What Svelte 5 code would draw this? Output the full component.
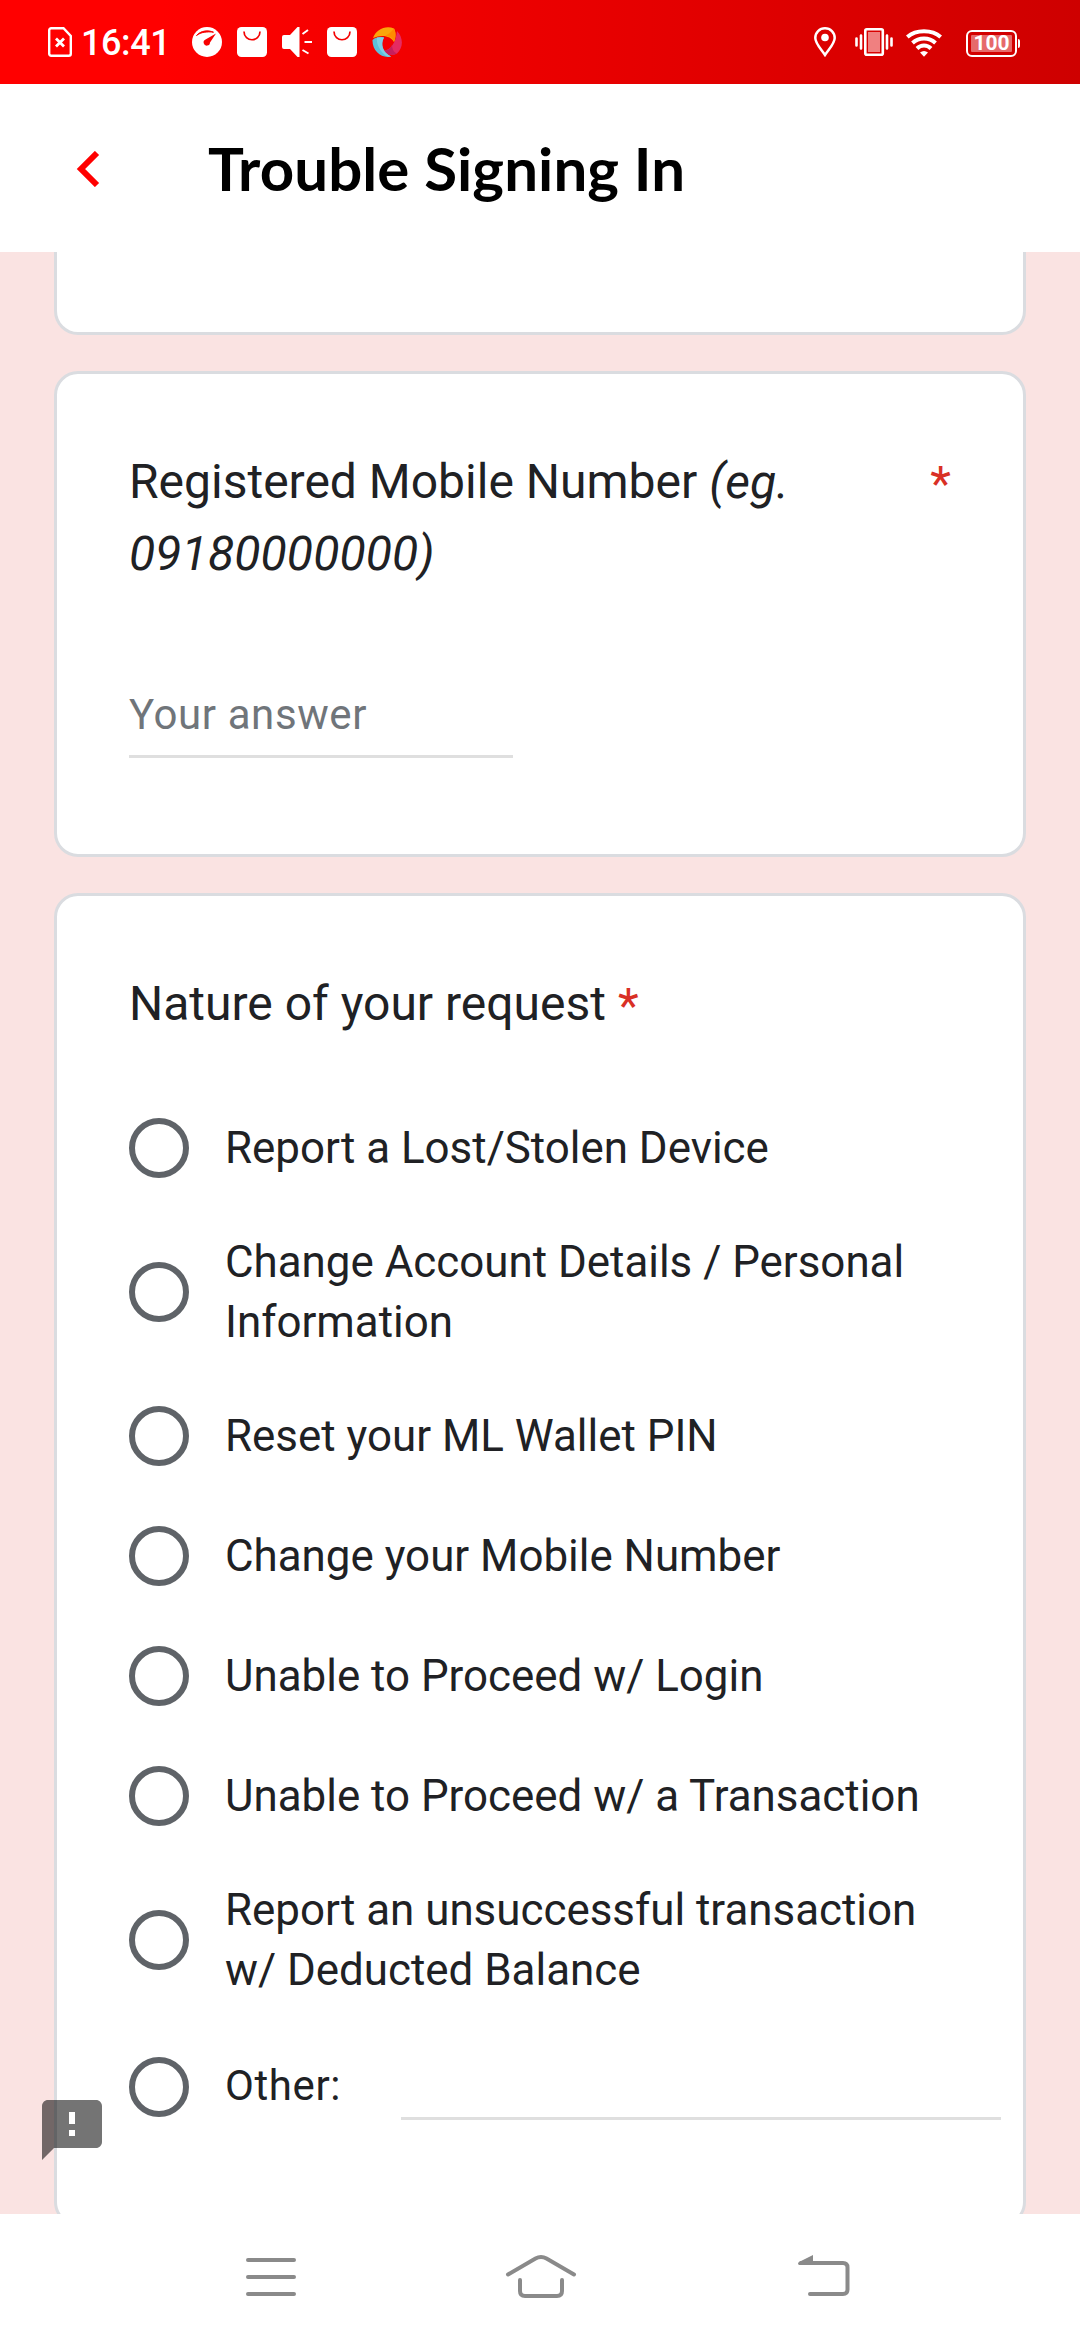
<script>
  const options = [
    'Report a Lost/Stolen Device',
    'Change Account Details / Personal Information',
    'Reset your ML Wallet PIN',
    'Change your Mobile Number',
    'Unable to Proceed w/ Login',
    'Unable to Proceed w/ a Transaction',
    'Report an unsuccessful transaction w/ Deducted Balance'
  ];
</script>

{#snippet bag()}
  <svg width="30" height="30" viewBox="0 0 30 30">
    <rect width="30" height="30" rx="4.5" fill="#fff" />
    <path d="M7 4.5c0 11 16 11 16 0" fill="none" stroke="#f50000" stroke-width="1.7" />
  </svg>
{/snippet}

<div class="screen">
  <div class="status">
    <div class="left">
      <svg class="sim" width="24" height="30" viewBox="0 0 24 30" fill="none" stroke="#fff">
        <path d="M3.4 1.2H15.5L22.800 9V26.800a2 2 0 0 1-2 2H3.2a2 2 0 0 1-2-2V3.2a2 2 0 0 1 2-2z" stroke-width="2.4" />
        <path d="M8 11.5l8 8M16 11.5l-8 8" stroke-width="2.8" />
      </svg>
      <span class="time">16:41</span>
      <div class="icons">
        <svg width="30" height="30" viewBox="0 0 30 30">
          <circle cx="15" cy="15" r="15" fill="#fff" />
          <path d="M4.5 8.5C9 3.5 16 2.8 21.5 5.2C15 4.4 9 5 4.5 8.5z" fill="#f80000" stroke="#f80000" />
          <path d="M24 6.5L18 15.5a3.2 3.2 0 1 1-4.5-3z" fill="#f80000" />
        </svg>
        {@render bag()}
        <svg width="30" height="30" viewBox="0 0 30 30">
          <path d="M2 8H8L15.5 0H17.5V30H15.5L8 22H2a2 2 0 0 1-2-2V10a2 2 0 0 1 2-2z" fill="#fff" />
          <path d="M20.5 7L26 3M22.5 15H30M20.5 23l6 3.5" stroke="#fff" stroke-width="2" />
        </svg>
        {@render bag()}
        <svg width="30" height="30" viewBox="0 0 30 30">
          <path d="M1 11C4 3 13-2 22 1.500C24 5 24 10 22 15C19 9 10 7 1 11z" fill="#fba50a" />
          <path d="M25 4C31 10 32 20 25 26.500C21 29 15 28 11.500 24C19 23 24 15 25 4z" fill="#e52b62" />
          <path d="M.5 13C4 10 8 9.500 12 10.500C8 18 11 25 19 29.500C10 32 0 24 .5 13z" fill="#5dbfdb" />
          <path d="M13 9C18 9 21 11 22 15C24 11 24 5 22 1.500C20 4 17 7 13 9z" fill="#ff8c00" />
          <path d="M20 17C20 20 17 23 11.500 24C15 28 21 29 25 26.500C21 25 20 21 20 17z" fill="#c51f5d" />
          <path d="M5 10.500C4 17 8 24 14 29C17 30 18 30 19 29.500C11 25 8 18 12 10.500z" fill="#7dcfe4" />
        </svg>
      </div>
    </div>
    <div class="right">
      <svg width="22" height="30" viewBox="0 0 22 30">
        <path d="M11 1.300C5.500 1.300 1.300 5.500 1.300 11C1.300 16.500 7 22 11 28C15 22 20.700 16.500 20.700 11C20.700 5.500 16.500 1.300 11 1.300z" fill="none" stroke="#fff" stroke-width="2.500" />
        <circle cx="11" cy="10.500" r="3.800" fill="#fff" />
      </svg>
      <svg class="vib" width="38" height="28" viewBox="0 0 38 28">
        <rect x="10.300" y="1.300" width="17.500" height="25.400" rx="1.500" fill="none" stroke="#fff" stroke-width="2.600" />
        <rect x="13" y="4" width="12" height="20" fill="#f08080" />
        <path d="M6 7.500v13M32 7.500v13M1.500 10.500v7M36.500 10.500v7" stroke="#fff" stroke-width="2.600" stroke-linecap="round" />
      </svg>
      <svg class="wifi" width="36" height="28" viewBox="0 0 36 28">
        <g fill="none" stroke="#fff" stroke-width="4">
          <path d="M1.300 8C10 .2 26 .2 34.700 8" />
          <path d="M6.500 14C13 8 23 8 29.500 14" />
          <path d="M11 19.500C15 15.500 21 15.500 25 19.500" />
        </g>
        <path d="M14 23.500Q18 20.500 22 23.500L18 27.800z" fill="#fff" />
      </svg>
      <div class="battery"><div class="cell">100</div><i></i></div>
    </div>
  </div>

  <header>
    <svg width="24" height="36" viewBox="0 0 24 36">
      <path d="M21 2L5 18L21 34" fill="none" stroke="#f00" stroke-width="6" />
    </svg>
    <h1>Trouble Signing In</h1>
  </header>

  <main>
    <section class="card previous"></section>

    <section class="card mobile">
      <div class="question">
        <div>
          <p>Registered Mobile Number <em>(eg.</em></p>
          <p><em>09180000000)</em></p>
        </div>
        <b class="aside">*</b>
      </div>
      <div class="answer">Your answer</div>
    </section>

    <section class="card nature">
      <div class="question"><p>Nature of your request <b>*</b></p></div>
      <div class="options">
        {#each options as option}
          <div class="option"><span class="radio"></span><span class="label">{option}</span></div>
        {/each}
        <div class="option other">
          <span class="radio"></span><span class="label">Other:</span><span class="line"></span>
        </div>
      </div>
    </section>

    <svg class="feedback" width="72" height="72" viewBox="0 0 24 24">
      <path d="M20 2H4c-1.100 0-2 .9-2 2v18l4-4h14c1.100 0 2-.9 2-2V4c0-1.100-.9-2-2-2zm-7 12h-2v-2h2v2zm0-4h-2V6h2v4z" />
    </svg>
  </main>

  <nav>
    <svg width="50" height="46" viewBox="0 0 50 46">
      <path d="M2 6H48M2 23H48M2 40H48" />
    </svg>
    <svg width="72" height="46" viewBox="0 0 72 46">
      <path d="M3 20.500L30.500 4.500Q36 1.500 41.500 4.500L69 20.500M15 26V37Q15 42 20 42H52Q57 42 57 37V26" />
    </svg>
    <svg width="64" height="46" viewBox="0 0 64 46">
      <path d="M15 9H57Q61.500 9 61.500 13.500V35.500Q61.500 40 57 40H24" />
      <path class="tip" d="M13 11Q11 9.500 13 8L27 1V11z" />
    </svg>
  </nav>
</div>

<style>
  :global(body) { margin: 0; background: #fff; }
  .screen {
    width: 1080px; height: 2340px; display: flex; flex-direction: column;
    font-family: Roboto, sans-serif; color: #202124; background: #fff; overflow: hidden;
  }
  svg { display: block; flex: none; }
  .status {
    height: 84px; flex: none; box-sizing: border-box; padding: 0 60px 0 48px;
    display: flex; align-items: center; justify-content: space-between;
    background: linear-gradient(90deg, #f00 0%, #f00 15%, #ce0000 100%); color: #fff;
  }
  .left, .right, .icons { display: flex; align-items: center; }
  .time {
    width: 111px; margin-left: 9px; box-sizing: border-box; padding-top: 2px;
    font-size: 36px; font-weight: 500; line-height: 42px; letter-spacing: -0.4px;
  }
  .icons { gap: 15px; }
  .vib { margin-left: 19px; }
  .wifi { margin: 2px 24px 0 13px; }
  .battery { display: flex; align-items: center; margin-top: 3px; }
  .cell {
    width: 51px; height: 27px; box-sizing: border-box; border: 2px solid #fff; border-radius: 6px;
    padding: 3px; font-size: 21px; font-weight: 700; line-height: 17px; text-align: center;
    background: #e66a6a content-box; background-clip: content-box;
  }
  .battery i { width: 2px; height: 9px; margin-left: 1px; background: #fff; border-radius: 0 2px 2px 0; }
  header { height: 168px; flex: none; display: flex; align-items: center; padding-left: 76px; background: #fff; }
  header svg { margin-top: 2px; }
  h1 { margin: 0 0 0 108px; font: 700 60px/72px Lato, sans-serif; letter-spacing: 0.1px; color: #000; }
  main {
    height: 1962px; flex: none; position: relative; overflow: hidden; box-sizing: border-box;
    padding: 0 54px; background: #fae3e2; display: flex; flex-direction: column; gap: 36px;
  }
  .card { flex: none; box-sizing: border-box; border: 3px solid #dadce0; border-radius: 24px; background: #fff; padding: 72px; }
  .previous { height: 83px; border-top: 0; border-radius: 0 0 24px 24px; padding: 0; }
  .mobile { height: 486px; }
  .nature { height: 1333px; padding-right: 20px; }
  .question { display: flex; justify-content: space-between; font-size: 48px; line-height: 72px; }
  .question p { margin: 0; height: 72px; }
  .question em { letter-spacing: 0.15px; }
  .question b { font-weight: 400; color: #d93025; line-height: 60px; vertical-align: -2px; }
  .question .aside { line-height: 72px; margin-top: 2px; }
  .answer {
    width: 384px; height: 73px; box-sizing: border-box; margin-top: 95px; border-bottom: 3px solid #dfdfdf;
    font-size: 42px; line-height: 60px; letter-spacing: 0.6px; color: #70757a;
  }
  .options { margin-top: 48px; }
  .option { display: flex; align-items: center; gap: 36px; padding: 24px 0; min-height: 120px; box-sizing: border-box; }
  .radio { width: 60px; height: 60px; flex: none; box-sizing: border-box; border: 6px solid #5f6368; border-radius: 50%; }
  .label { max-width: 710px; font-size: 43.9px; line-height: 60px; }
  .other { height: 126px; }
  .other .label { width: 140px; font-size: 42px; letter-spacing: 0.6px; margin-top: -3px; }
  .line { width: 600px; height: 63px; box-sizing: border-box; border-bottom: 3px solid #dfdfdf; align-self: flex-start; margin-top: 9px; }
  .feedback { position: absolute; left: 36px; bottom: 48px; fill: #000; opacity: 0.54; }
  nav { height: 126px; flex: none; display: flex; align-items: center; gap: 209px; padding-left: 246px; background: #fff; }
  nav path { fill: none; stroke: #8a8a8a; stroke-width: 4; stroke-linecap: round; }
  nav .tip { fill: #8a8a8a; stroke: none; }
</style>
